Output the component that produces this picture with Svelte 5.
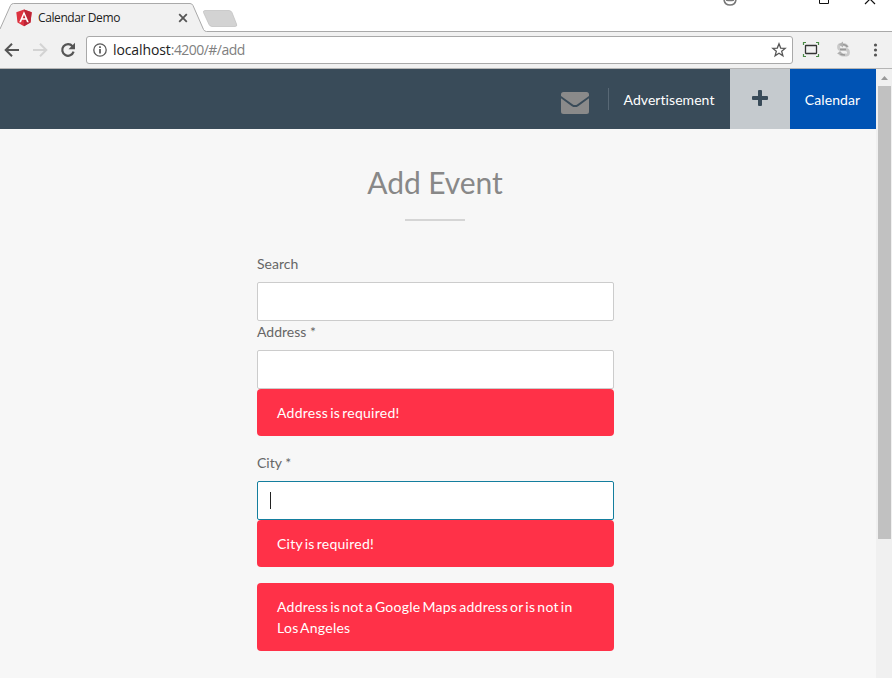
<script>
  const fields = [
    { label: 'Search', errors: [] },
    { label: 'Address *', errors: ['Address is required!'] },
    {
      label: 'City *',
      focused: true,
      errors: ['City is required!', 'Address is not a Google Maps address or is not in Los Angeles']
    }
  ];
</script>

<div class="window">
  <div class="tabstrip">
    <svg class="tabs" width="892" height="32" viewBox="0 0 892 32">
      <path d="M0 29 L10.5 5.5 Q11.5 3.5 13.500 3.500 H190 Q192 3.500 193 5.500 L203.500 29.500 Q204.500 31.500 206.500 31.500 H892 V32 H0Z" fill="#f1f1f1" />
      <path d="M0 29 L10.500 5.500 Q11.500 3.500 13.500 3.500 H190 Q192 3.500 193 5.500 L203.500 29.500 Q204.500 31.500 206.500 31.500 H892" fill="none" stroke="#a9a9a9" />
      <path d="M205 10.500 H229 Q231 10.500 232 12.500 L236.500 24 Q237.500 26.500 235 26.500 H212 Q210 26.500 209 24.500 L203.500 12.500 Q203 10.500 205 10.500Z" fill="#d3d3d3" stroke="#bfbfbf" stroke-width=".7" />
      <path d="M179.200 14.200l7.600 7.600M186.800 14.200l-7.600 7.600" stroke="#555" stroke-width="1.800" />
      <path d="M24 9.500l7.700 2.800-1.200 10.300L24 26.200l-6.500-3.600-1.200-10.300z" fill="#dd3340" />
      <path d="M24 9.500l7.700 2.800-1.200 10.300L24 26.200z" fill="#bd2436" />
      <path d="M24 11.300l-4.800 10.900H21l1-2.500h4l1 2.500h1.800zM24 14.700l1.400 3.500h-2.800z" fill="#fff" fill-rule="evenodd" />
      <path d="M724 0Q725 5 730 5T736 0M726 0Q730 1 734 0" stroke="#777" fill="none" stroke-width="1.600" />
      <path d="M819.500 0V3.500H828.500V0" fill="none" stroke="#111" />
      <path d="M865 4l5-5 5 5" fill="none" stroke="#111" stroke-width="1.200" />
    </svg>
    <span class="tab-title">Calendar Demo</span>
  </div>

  <div class="toolbar">
    <svg class="nav-icons" width="80" height="36" viewBox="0 0 80 36" fill="none">
      <path d="M19 18H6M12 11.700L5.700 18l6.300 6.300" stroke="#555" stroke-width="2" />
      <path d="M33 18h13M40 11.700l6.300 6.300-6.300 6.300" stroke="#d3d3d3" stroke-width="2" />
      <path d="M72.500 14.200A5.800 5.800 0 1 0 73.600 19.700" stroke="#555" stroke-width="2.200" />
      <path d="M75 10.800v6.500h-6.500z" fill="#555" />
    </svg>
    <div class="address">
      <svg width="14" height="14" viewBox="0 0 14 14" fill="none">
        <circle cx="7" cy="7" r="6.200" stroke="#5a5a5a" stroke-width="1.300" />
        <path d="M7 6v4.500M7 3.300v1.600" stroke="#555" stroke-width="1.700" />
      </svg>
      <span class="url">localhost<i>:4200/#/add</i></span>
      <svg class="star" width="16" height="16" viewBox="0 0 16 16">
        <path d="M8 1.800l1.700 4.300 4.500.3-3.500 2.900 1.200 4.500L8 11.300l-3.900 2.500 1.200-4.500-3.500-2.900 4.500-.3z" fill="none" stroke="#555" stroke-width="1.300" />
      </svg>
    </div>
    <svg class="extensions" width="98" height="36" viewBox="0 0 98 36" fill="none">
      <rect x="12.500" y="13.500" width="11" height="8" rx=".5" stroke="#333" stroke-width="1.300" />
      <path d="M10.500 13V10.500H13M23 10.500H25.500V13M10.500 22V24.500H13M23 24.500H25.500V22" stroke="#4a8a45" stroke-width="1.200" />
      <path d="M54.500 15.500Q53.500 12.500 50 12.500H48Q45.500 12.500 45.500 15T48 17.500H52.500Q55.500 17.500 55.500 20.500T52.500 23H50Q47 23 46 20.500" stroke="#c9c9c9" stroke-width="2.800" />
      <path d="M54.500 15Q53 12.500 49 12.500M46 21Q48 23 52 23M47 17.500H53" stroke="#999" stroke-width="1.300" />
      <path d="M50 9.500l-4 3 4 3M47 19l-3 3h6z" fill="#b0b0b0" />
      <g fill="#555"><circle cx="82.500" cy="13" r="1.600" /><circle cx="82.500" cy="18" r="1.600" /><circle cx="82.500" cy="23" r="1.600" /></g>
    </svg>
  </div>

  <div class="viewport">
    <div class="page">
      <header>
        <svg class="mail" width="28" height="22" viewBox="0 0 28 22">
          <path d="M2.500 0h23Q28 0 28 2.500V4L16.500 12.200Q14 14 11.500 12.200L0 4V2.500Q0 0 2.500 0zM0 6.300l10.500 7.600Q14 16.300 17.500 13.900L28 6.300V19.500Q28 22 25.500 22h-23Q0 22 0 19.500z" fill="#8a8a8a" />
        </svg>
        <span class="divider"></span>
        <a class="advert" href="#/ad">Advertisement</a>
        <a class="add" href="#/add" aria-label="Add">
          <svg width="16" height="16" viewBox="0 0 16 16"><path d="M6 1Q6 0 7 0h2q1 0 1 1v5h5q1 0 1 1v2q0 1-1 1h-5v5q0 1-1 1H7q-1 0-1-1v-5H1q-1 0-1-1V7q0-1 1-1h5z" fill="#394b59" /></svg>
        </a>
        <a class="calendar" href="#/calendar">Calendar</a>
      </header>
      <main>
        <h1>Add Event</h1>
        <hr />
        <form>
          {#each fields as field}
            <div class="field">
              <span class="label">{field.label}</span>
              <div class="input" class:focused={field.focused}>
                {#if field.focused}<span class="caret"></span>{/if}
              </div>
              {#each field.errors as error}
                <div class="alert">{error}</div>
              {/each}
            </div>
          {/each}
        </form>
      </main>
    </div>
    <div class="scrollbar">
      <svg width="16" height="17" viewBox="0 0 16 17"><path d="M5 11l3.500-4 3.500 4z" fill="#999" /></svg>
      <div class="thumb"></div>
    </div>
  </div>
</div>

<style>
  .window { width: 892px; height: 678px; overflow: hidden; display: flex; flex-direction: column; background: #fff; }
  .tabstrip { height: 32px; flex: none; position: relative; }
  .tabs { display: block; }
  .tab-title { position: absolute; left: 38px; top: 10px; font: 12px/16px "Open Sans", sans-serif; letter-spacing: -0.4px; color: #222; }
  .toolbar { height: 37px; flex: none; box-sizing: border-box; display: flex; background: #f1f1f1; border-bottom: 1px solid #b5b5b5; }
  .nav-icons { width: 80px; margin-right: 6px; }
  .address { width: 707px; height: 28px; margin-top: 4px; box-sizing: border-box; border: 1px solid #a9a9a9; border-radius: 3px; background: #fff; display: flex; align-items: center; padding: 0 5px 0 6px; }
  .url { margin-left: 6px; font: 14px/20px "Open Sans", sans-serif; letter-spacing: -0.1px; color: #222; }
  .url i { font-style: normal; color: #808080; letter-spacing: -0.54px; }
  .star { margin-left: auto; }
  .viewport { flex: 1; display: flex; min-height: 0; }
  .page { width: 876px; background: #f7f7f7; font-family: Lato, sans-serif; }
  header { height: 60px; background: #394b59; display: flex; justify-content: flex-end; align-items: center; font-size: 14px; }
  header a { color: #fff; text-decoration: none; height: 60px; display: flex; align-items: center; justify-content: center; padding-right: 1px; box-sizing: border-box; }
  .mail { margin: 8px 19px 0 0; }
  .divider { width: 1px; height: 22px; background: #586875; }
  header .advert { width: 121px; letter-spacing: 0.06px; }
  header .add { width: 60px; background: #c5cace; padding: 0 0 2px; }
  header .calendar { width: 86px; background: #0053b4; letter-spacing: 0.08px; }
  main { padding: 34px 6px 0 0; }
  h1 { margin: 0; font-size: 30px; line-height: 38px; font-weight: 400; color: #888; text-align: center; letter-spacing: -0.08px; }
  hr { width: 60px; height: 2px; border: 0; background: #d5d5d5; margin: 18px 0 32px 405px; }
  form { width: 357px; margin: 0 0 0 257px; }
  .label { display: block; line-height: 22px; margin-bottom: 7px; font-size: 14px; color: #666; }
  .input { height: 39px; box-sizing: border-box; border: 1px solid #ccc; border-radius: 2px; background: #fff; display: flex; align-items: center; padding-left: 12px; }
  .input.focused { border-color: #147e9e; }
  .caret { width: 1px; height: 17px; background: #222; }
  .alert { padding: 13px 20px; margin-bottom: 16px; background: #ff3148; border-radius: 4px; color: #fff; font-size: 14px; line-height: 21px; letter-spacing: 0.26px; word-spacing: -1.8px; }
  .scrollbar { width: 16px; background: #f0f0f0; }
  .scrollbar svg { display: block; }
  .thumb { width: 13px; height: 453px; margin-left: 2px; background: #c1c1c1; }
</style>
